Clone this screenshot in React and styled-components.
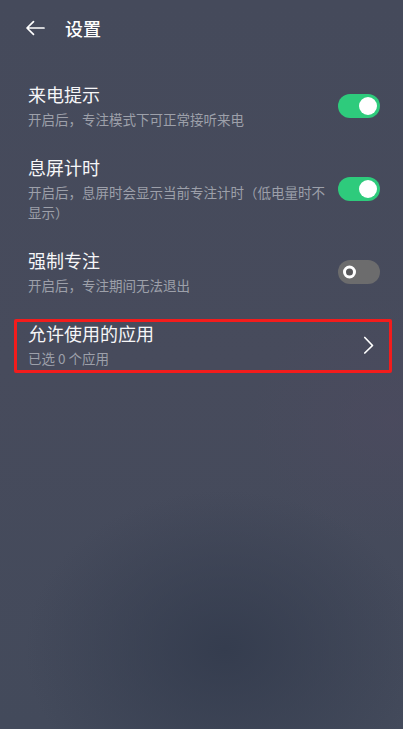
import React from 'react';
import styled, { createGlobalStyle } from 'styled-components';

const GlobalStyle = createGlobalStyle`
  html, body {
    margin: 0;
    padding: 0;
    background: #464b5b;
  }
  * {
    box-sizing: border-box;
  }
`;

const Page = styled.div`
  width: 403px;
  height: 729px;
  overflow: hidden;
  font-family: "Noto Sans CJK SC", "Noto Sans", sans-serif;
  color: #f4f4f6;
  background:
    radial-gradient(ellipse 200px 160px at 225px 650px, rgba(52, 60, 78, 0.95), rgba(52, 60, 78, 0) 100%),
    radial-gradient(ellipse 140px 120px at 390px 420px, rgba(78, 74, 96, 0.5), rgba(78, 74, 96, 0) 100%),
    linear-gradient(180deg, #454a5b 0%, #474b5c 50%, #434a5b 100%);
`;

const TopBar = styled.header`
  height: 56px;
  display: flex;
  align-items: center;
  padding-left: 24px;
  gap: 19px;
`;

const BackButton = styled.button`
  width: 22px;
  height: 22px;
  padding: 0;
  border: 0;
  background: none;
  display: flex;
  align-items: center;
  justify-content: center;
  cursor: pointer;
`;

const Title = styled.h1`
  margin: 0;
  font-size: 18px;
  font-weight: 500;
  line-height: 25px;
  color: #ffffff;
`;

const List = styled.div`
  padding-top: 13px;
  display: flex;
  flex-direction: column;
`;

const Row = styled.div`
  position: relative;
  display: flex;
  align-items: center;
  gap: 10px;
  padding: 13px 23px 13px 28px;

  &::after {
    content: '';
    display: ${props => (props.highlight ? 'block' : 'none')};
    position: absolute;
    top: 11px;
    bottom: 8px;
    left: 14px;
    right: 11px;
    border: 3px solid #f31c1c;
    border-radius: 2px;
    pointer-events: none;
  }
`;

const Texts = styled.div`
  flex: 1;
  display: flex;
  flex-direction: column;
  gap: 2px;
`;

const Label = styled.div`
  font-size: 18px;
  line-height: 25px;
  color: #f6f6f8;
`;

const Hint = styled.div`
  font-size: 13.5px;
  line-height: 20px;
  color: #9da0aa;
`;

const Track = styled.div`
  position: relative;
  flex: none;
  width: 42px;
  height: 24px;
  border-radius: 12px;
  background: ${props => (props.on ? '#2ecb7c' : '#6c6c6d')};
`;

const Knob = styled.span`
  position: absolute;
  top: 50%;
  transform: translateY(-50%);
  border-radius: 50%;
  ${props =>
    props.on
      ? `
    right: 3px;
    width: 18px;
    height: 18px;
    background: #ffffff;
  `
      : `
    left: 5px;
    width: 13px;
    height: 13px;
    border: 3px solid #ffffff;
    background: #58585a;
  `}
`;

const Chevron = styled.span`
  flex: none;
  width: 24px;
  height: 24px;
  display: flex;
`;

const Toggle = ({ on }) => (
  <Track on={on ? 1 : 0}>
    <Knob on={on ? 1 : 0} />
  </Track>
);

const settings = [
  { label: '来电提示', hint: '开启后，专注模式下可正常接听来电', on: true },
  { label: '息屏计时', hint: '开启后，息屏时会显示当前专注计时（低电量时不显示）', on: true },
  { label: '强制专注', hint: '开启后，专注期间无法退出', on: false },
];

export default function App() {
  return (
    <Page>
      <GlobalStyle />
      <TopBar>
        <BackButton type="button" aria-label="返回">
          <svg width="20" height="16" viewBox="0 0 20 16" fill="none">
            <path
              d="M19 8H2.2M8.5 1.6L2 8l6.5 6.4"
              stroke="#ffffff"
              strokeWidth="1.7"
              strokeLinecap="round"
              strokeLinejoin="round"
            />
          </svg>
        </BackButton>
        <Title>设置</Title>
      </TopBar>
      <List>
        {settings.map(item => (
          <Row key={item.label}>
            <Texts>
              <Label>{item.label}</Label>
              <Hint>{item.hint}</Hint>
            </Texts>
            <Toggle on={item.on} />
          </Row>
        ))}
        <Row highlight={1}>
          <Texts>
            <Label>允许使用的应用</Label>
            <Hint>已选 0 个应用</Hint>
          </Texts>
          <Chevron>
            <svg width="24" height="24" viewBox="0 0 24 24" fill="none">
              <path
                d="M8.8 4.5L16.5 12.5L8.8 20"
                stroke="#ffffff"
                strokeWidth="1.7"
                strokeLinecap="round"
                strokeLinejoin="round"
              />
            </svg>
          </Chevron>
        </Row>
      </List>
    </Page>
  );
}
